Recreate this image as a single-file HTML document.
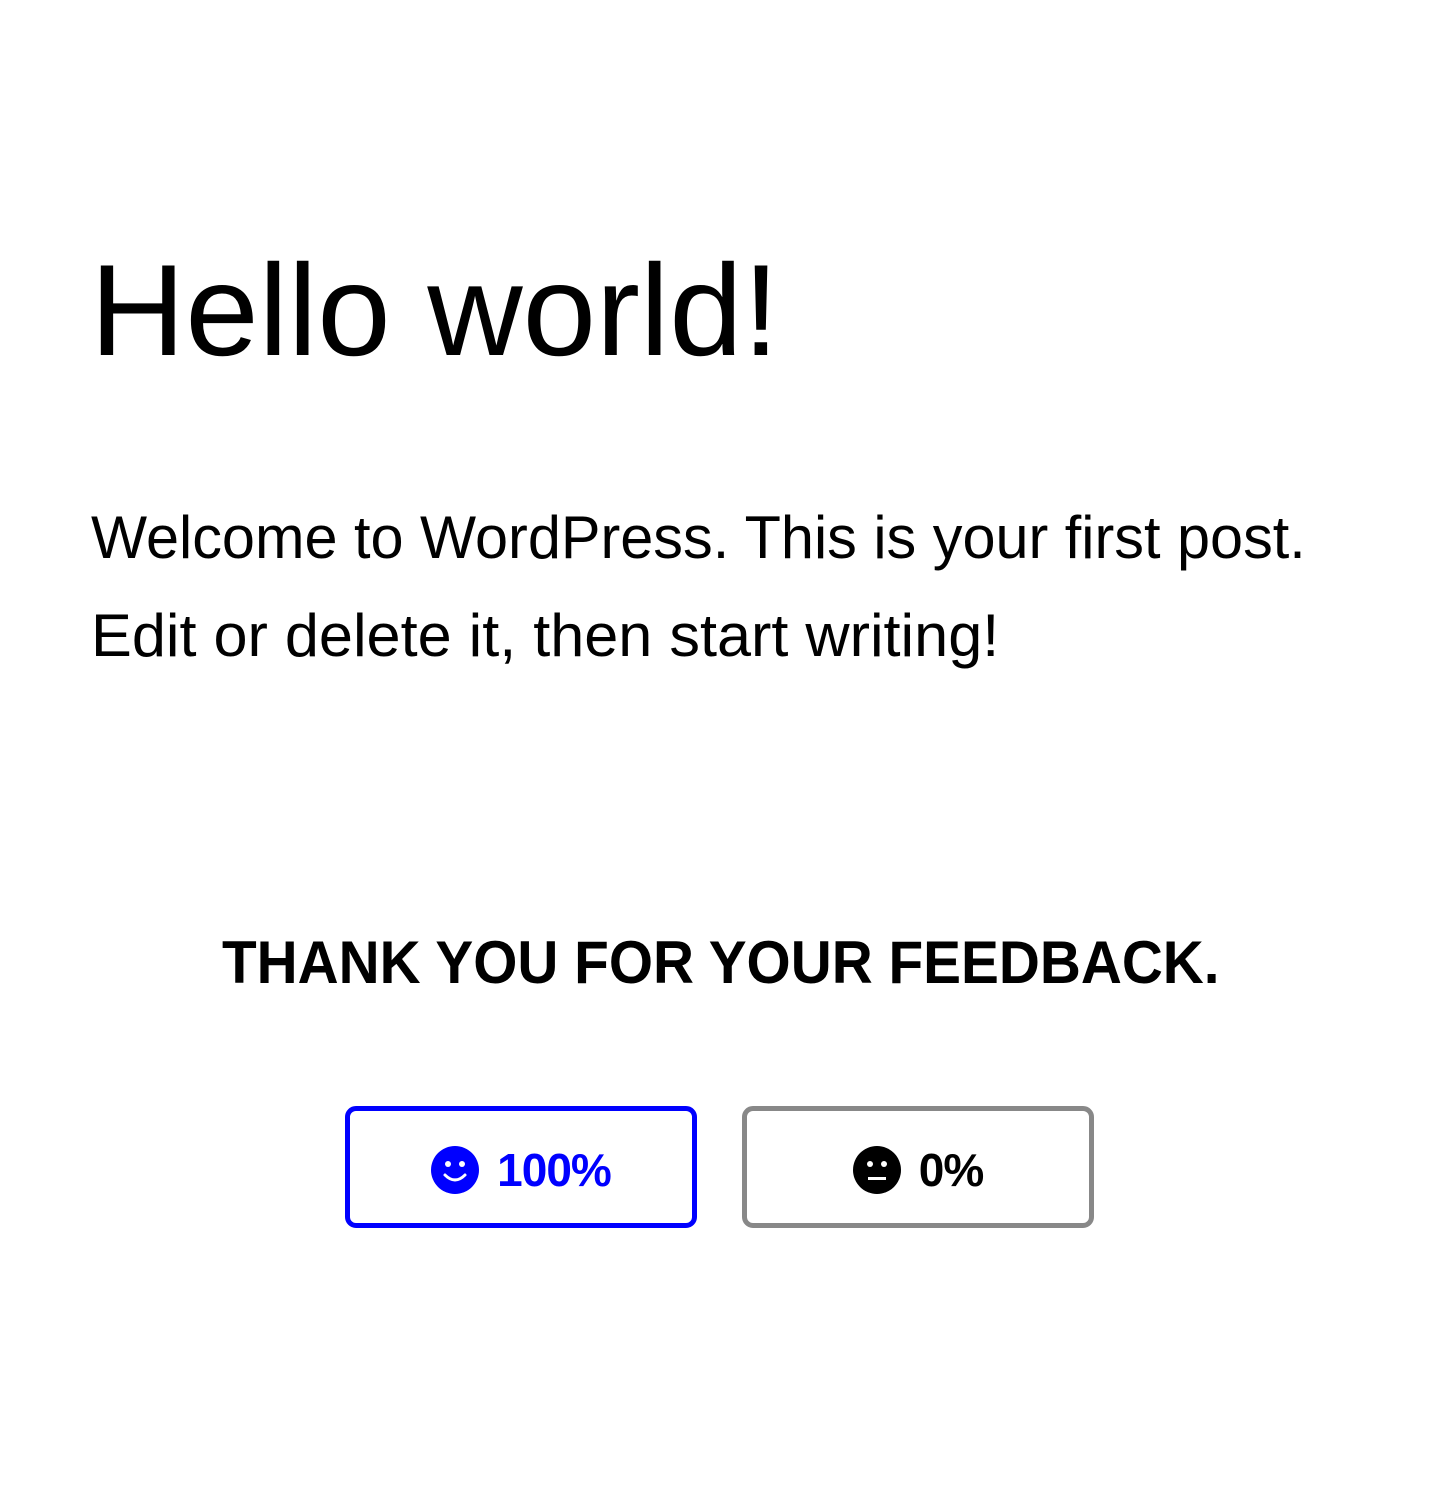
<!DOCTYPE html>
<html><head><meta charset="utf-8"><style>
html,body{margin:0;padding:0;background:#fff;width:1440px;height:1485px;overflow:hidden}
body{font-family:"Liberation Sans",sans-serif;color:#000;position:relative}
.a{position:absolute;white-space:nowrap;transform-origin:0 0}
h1{margin:0;font-weight:400;font-size:130px;line-height:1;left:90px;top:245px}
.p{font-size:60px;line-height:1;left:91px}
.t{font-weight:700;font-size:60px;line-height:1;left:222px;top:933px}
.btn{position:absolute;top:1106px;width:342px;border:5px solid;border-radius:11px;display:flex;align-items:center;justify-content:center;font-weight:700;font-size:46px;letter-spacing:-1px;padding-top:6px;box-sizing:content-box;height:106px}
.ic{width:48px;height:48px;margin-right:18px}
</style></head><body>
<h1 class="a" style="transform:scaleX(1.015)">Hello world!</h1>
<div class="a p" style="top:508px;transform:scaleX(0.99)">Welcome to WordPress. This is your first post.</div>
<div class="a p" style="top:606px;transform:scaleX(1.02)">Edit or delete it, then start writing!</div>
<div class="a t" style="transform:scaleX(0.946)">THANK YOU FOR YOUR FEEDBACK.</div>
<div class="btn" style="left:345px;border-color:#00f;color:#00f">
<svg class="ic" viewBox="0 0 48 48"><circle cx="24" cy="24" r="24" fill="#00f"/><circle cx="17" cy="18" r="3" fill="#fff"/><circle cx="31" cy="18" r="3" fill="#fff"/><path d="M14 29 Q24 39 34 29" stroke="#fff" stroke-width="3" fill="none" stroke-linecap="round"/></svg>100%</div>
<div class="btn" style="left:742px;border-color:#888;color:#000">
<svg class="ic" viewBox="0 0 48 48"><circle cx="24" cy="24" r="24" fill="#000"/><circle cx="17" cy="18" r="3" fill="#fff"/><circle cx="31" cy="18" r="3" fill="#fff"/><rect x="15" y="31" width="18" height="3" fill="#fff"/></svg>0%</div>
</body></html>
